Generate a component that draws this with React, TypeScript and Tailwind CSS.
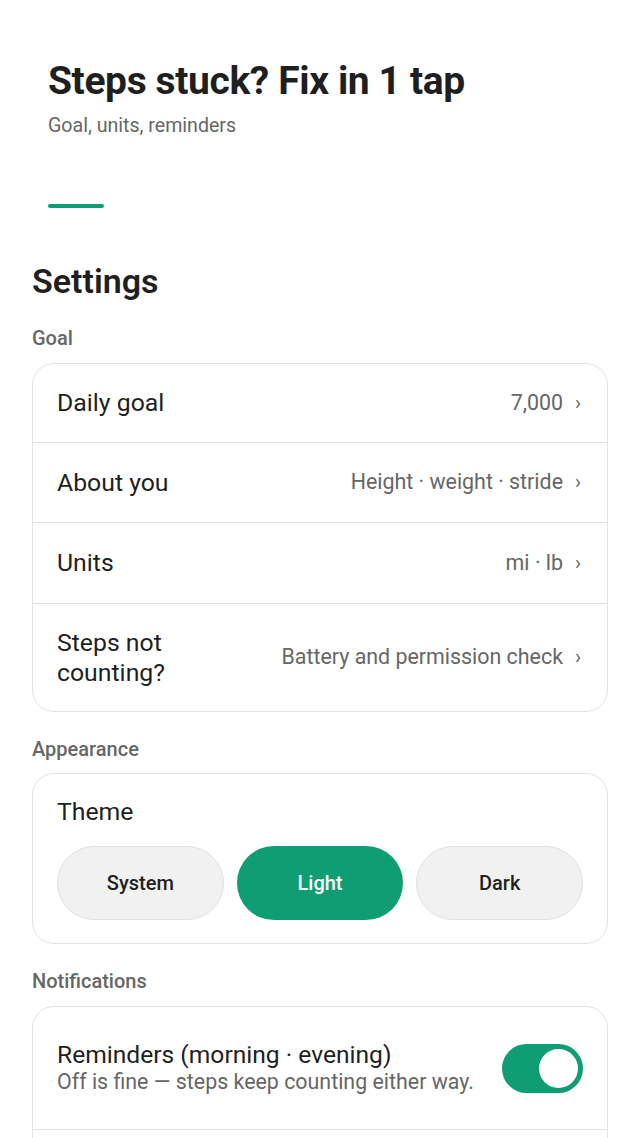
import React from "react";

const GREEN = "bg-[#0f9d74]";

type Row = { label: React.ReactNode; value: string; h: string };

const GOAL_ROWS: Row[] = [
  { label: "Daily goal", value: "7,000", h: "h-[78px]" },
  { label: "About you", value: "Height · weight · stride", h: "h-[80px]" },
  { label: "Units", value: "mi · lb", h: "h-[81px]" },
  { label: <>Steps not<br />counting?</>, value: "Battery and permission check", h: "h-[108px]" },
];

function SectionLabel({ children }: { children: React.ReactNode }) {
  return <div className="text-[20px] font-medium text-[#666] leading-none">{children}</div>;
}

export default function App() {
  return (
    <div className="min-h-screen bg-white text-[#1f1f1f]" style={{ fontFamily: "Roboto, 'Liberation Sans', sans-serif" }}>
      {/* Header */}
      <div className="px-12 pt-[58px]">
        <h1 className="text-[39px] font-bold leading-[46px] tracking-[-0.01em] text-[#1f1f1f]">Steps stuck? Fix in 1 tap</h1>
        <p className="mt-[10px] text-[19.6px] leading-6 text-[#666]">Goal, units, reminders</p>
        <div className={`mt-[66px] h-1 w-14 rounded-full ${GREEN}`} />
      </div>

      <div className="px-8 pt-[53px]">
        <h2 className="text-[34px] font-semibold leading-[40px]">Settings</h2>

        {/* Goal */}
        <div className="mt-[27px]">
          <SectionLabel>Goal</SectionLabel>
        </div>
        <div className="mt-[15px] rounded-[22px] border border-[#e2e2e2] overflow-hidden">
          {GOAL_ROWS.map((r, i) => (
            <div
              key={i}
              className={`flex items-center justify-between pl-[24px] pr-[26px] ${r.h} ${i > 0 ? "border-t border-[#e2e2e2]" : ""}`}
            >
              <div className="text-[24.8px] leading-[30px] text-[#1f1f1f]">{r.label}</div>
              <div className="flex items-center gap-[12px] text-[21.4px] text-[#666]">
                <span>{r.value}</span>
                <span className="text-[20px] text-[#666]">›</span>
              </div>
            </div>
          ))}
        </div>

        {/* Appearance */}
        <div className="mt-[27px]">
          <SectionLabel>Appearance</SectionLabel>
        </div>
        <div className="mt-[14px] rounded-[22px] border border-[#e2e2e2] px-[24px] pt-[23px] pb-[23px]">
          <div className="text-[24.8px] leading-[30px]">Theme</div>
          <div className="mt-[19px] grid grid-cols-3 gap-[13px]">
            <button className="h-[74px] rounded-full border border-[#e0e0e0] bg-[#f0f1f0] text-[20px] font-medium text-[#1f1f1f]">System</button>
            <button className={`h-[74px] rounded-full ${GREEN} text-[20px] font-medium text-white`}>Light</button>
            <button className="h-[74px] rounded-full border border-[#e0e0e0] bg-[#f0f1f0] text-[20px] font-medium text-[#1f1f1f]">Dark</button>
          </div>
        </div>

        {/* Notifications */}
        <div className="mt-[27px]">
          <SectionLabel>Notifications</SectionLabel>
        </div>
        <div className="mt-[15px] rounded-[22px] border border-[#e2e2e2] overflow-hidden">
          <div className="flex h-[122px] items-center justify-between px-[24px]">
            <div>
              <div className="text-[24.6px] leading-[28px]">Reminders (morning · evening)</div>
              <div className="text-[21.4px] leading-[26px] text-[#666]">Off is fine — steps keep counting either way.</div>
            </div>
            <div className={`flex h-[49px] w-[81px] shrink-0 items-center justify-end rounded-full ${GREEN} pr-[5px]`}>
              <div className="h-[39px] w-[39px] rounded-full bg-white" />
            </div>
          </div>
          <div className="border-t border-[#e2e2e2] h-[80px]" />
        </div>
      </div>
    </div>
  );
}
